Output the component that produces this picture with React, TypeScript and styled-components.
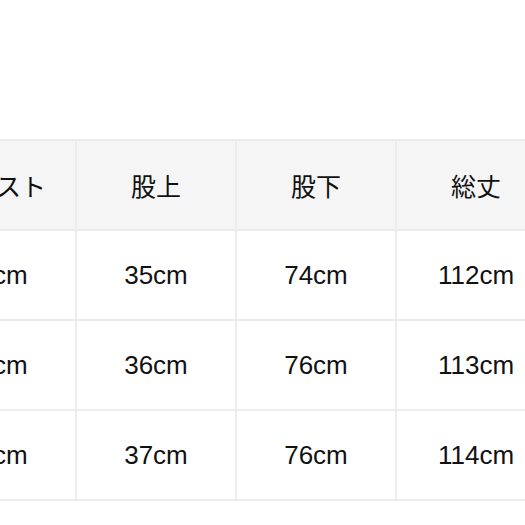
import React from 'react';
import styled, { createGlobalStyle } from 'styled-components';

const GlobalStyle = createGlobalStyle`
  html, body {
    margin: 0;
    padding: 0;
    background: #ffffff;
    overflow: hidden;
  }
  body {
    font-family: "Liberation Sans", "Noto Sans CJK JP", Arial, sans-serif;
    color: #141414;
  }
`;

const Page = styled.div`
  width: 525px;
  height: 525px;
  overflow: hidden;
  padding-top: 139px;
  box-sizing: border-box;
`;

// the size chart runs wider than the viewport, so it is shifted left
const SizeTable = styled.div`
  display: grid;
  grid-template-columns: repeat(4, 158px);
  grid-auto-rows: 88px;
  gap: 2px;
  padding: 2px;
  margin-left: -85px;
  width: max-content;
  background: #ececec;
`;

const Cell = styled.div<{ $head?: boolean }>`
  display: flex;
  align-items: center;
  justify-content: center;
  background: ${({ $head }) => ($head ? '#f5f5f5' : '#ffffff')};
  font-size: ${({ $head }) => ($head ? '25px' : '26px')};
  white-space: nowrap;
  color: #111111;
`;

const headers = ['ウエスト', '股上', '股下', '総丈'];

const rows = [
  ['68cm', '35cm', '74cm', '112cm'],
  ['70cm', '36cm', '76cm', '113cm'],
  ['72cm', '37cm', '76cm', '114cm'],
];

const App: React.FC = () => {
  return (
    <>
      <GlobalStyle />
      <Page>
        <SizeTable>
          {headers.map((h) => (
            <Cell key={h} $head>
              {h}
            </Cell>
          ))}
          {rows.map((row, i) =>
            row.map((value, j) => <Cell key={`${i}-${j}`}>{value}</Cell>)
          )}
        </SizeTable>
      </Page>
    </>
  );
};

export default App;
